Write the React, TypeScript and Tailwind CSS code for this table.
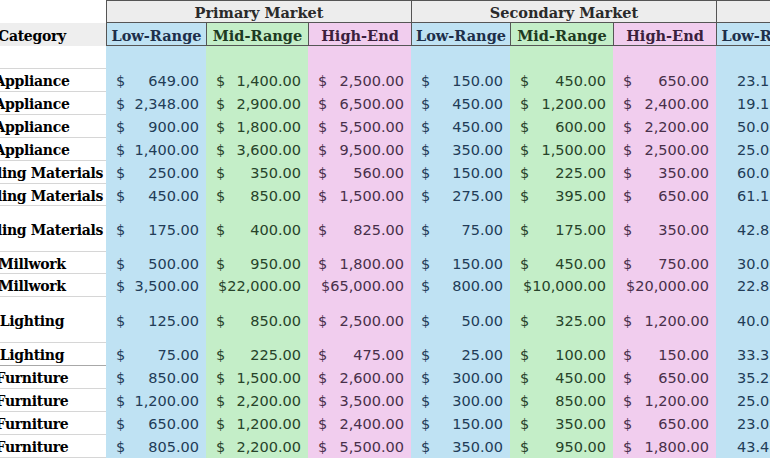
import React from "react";

type Row = { cat: string; h: string; v: number[]; pct: string };

const rows: Row[] = [
  { cat: "Appliance", h: "h-[23px]", v: [649, 1400, 2500, 150, 450, 650], pct: "23.11%" },
  { cat: "Appliance", h: "h-[23px]", v: [2348, 2900, 6500, 450, 1200, 2400], pct: "19.17%" },
  { cat: "Appliance", h: "h-[23px]", v: [900, 1800, 5500, 450, 600, 2200], pct: "50.00%" },
  { cat: "Appliance", h: "h-[23px]", v: [1400, 3600, 9500, 350, 1500, 2500], pct: "25.00%" },
  { cat: "Building Materials", h: "h-[23px]", v: [250, 350, 560, 150, 225, 350], pct: "60.00%" },
  { cat: "Building Materials", h: "h-[22px]", v: [450, 850, 1500, 275, 395, 650], pct: "61.11%" },
  { cat: "Building Materials", h: "h-[46px]", v: [175, 400, 825, 75, 175, 350], pct: "42.86%" },
  { cat: "Millwork", h: "h-[22px]", v: [500, 950, 1800, 150, 450, 750], pct: "30.00%" },
  { cat: "Millwork", h: "h-[23px]", v: [3500, 22000, 65000, 800, 10000, 20000], pct: "22.86%" },
  { cat: "Lighting", h: "h-[46px]", v: [125, 850, 2500, 50, 325, 1200], pct: "40.00%" },
  { cat: "Lighting", h: "h-[23px]", v: [75, 225, 475, 25, 100, 150], pct: "33.33%" },
  { cat: "Furniture", h: "h-[23px]", v: [850, 1500, 2600, 300, 450, 650], pct: "35.29%" },
  { cat: "Furniture", h: "h-[23px]", v: [1200, 2200, 3500, 300, 850, 1200], pct: "25.00%" },
  { cat: "Furniture", h: "h-[23px]", v: [650, 1200, 2400, 150, 350, 650], pct: "23.08%" },
  { cat: "Furniture", h: "h-[23px]", v: [805, 2200, 5500, 350, 950, 1800], pct: "43.48%" },
];

const cols = [
  { w: "w-[100px]", bg: "bg-[#bfe2f3]", fg: "text-[#223c57]", hfg: "text-[#1d2f4a]", label: "Low-Range" },
  { w: "w-[102px]", bg: "bg-[#c4eec8]", fg: "text-[#27432a]", hfg: "text-[#1d3a22]", label: "Mid-Range" },
  { w: "w-[103px]", bg: "bg-[#f1cdee]", fg: "text-[#48304a]", hfg: "text-[#3b1f3d]", label: "High-End" },
  { w: "w-[99px]", bg: "bg-[#bfe2f3]", fg: "text-[#223c57]", hfg: "text-[#1d2f4a]", label: "Low-Range" },
  { w: "w-[103px]", bg: "bg-[#c4eec8]", fg: "text-[#27432a]", hfg: "text-[#1d3a22]", label: "Mid-Range" },
  { w: "w-[103px]", bg: "bg-[#f1cdee]", fg: "text-[#48304a]", hfg: "text-[#3b1f3d]", label: "High-End" },
];

const fmt = (n: number) =>
  n.toLocaleString("en-US", { minimumFractionDigits: 2, maximumFractionDigits: 2 });

function Cat({ text }: { text: string }) {
  return (
    <div className="w-[106px] shrink-0 overflow-hidden h-full flex items-center pt-[3px]">
      <div className="w-[150px] ml-[-43px] shrink-0 text-center whitespace-nowrap font-bold text-[14px] text-black font-['DejaVu_Serif',serif] tracking-[-0.3px]">
        {text}
      </div>
    </div>
  );
}

export default function App() {
  return (
    <div className="w-[770px] h-[458px] overflow-hidden bg-white">
      <div className="w-max flex flex-col">
        {/* Group header */}
        <div className="flex h-[23px] font-['DejaVu_Serif',serif] font-bold text-[14.5px] text-[#2a2a2a]">
          <div className="w-[106px] shrink-0 bg-white" />
          <div className="w-[305px] shrink-0 bg-[#ededed] border-t border-l border-b border-[#555] flex items-center justify-center pt-[3px]">
            Primary Market
          </div>
          <div className="w-[305px] shrink-0 bg-[#ededed] border-t border-l border-b border-[#555] flex items-center justify-center pt-[3px]">
            Secondary Market
          </div>
          <div className="w-[100px] shrink-0 bg-[#ededed] border-t border-l border-b border-[#555]" />
        </div>
        {/* Sub header */}
        <div className="flex h-[23px] font-['DejaVu_Serif',serif] font-bold text-[14.5px]">
          <div className="w-[106px] shrink-0 bg-[#eeeeee] h-full">
            <Cat text="Category" />
          </div>
          {cols.map((c, i) => (
            <div
              key={i}
              className={`${c.w} ${c.bg} ${c.hfg} shrink-0 border-l border-b border-[#555] flex items-center justify-center whitespace-nowrap pt-[3px]`}
            >
              {c.label}
            </div>
          ))}
          <div className="w-[100px] shrink-0 bg-[#bfe2f3] text-[#1d2f4a] border-l border-b border-[#555] flex items-center justify-center whitespace-nowrap pt-[3px]">
            Low-Range
          </div>
        </div>
        {/* Blank row */}
        <div className="flex h-[23px]">
          <div className="w-[106px] shrink-0 border-b border-[#d6d6d6]" />
          {cols.map((c, i) => (
            <div key={i} className={`${c.w} ${c.bg} shrink-0`} />
          ))}
          <div className="w-[100px] shrink-0 bg-[#bfe2f3]" />
        </div>
        {/* Data rows */}
        {rows.map((r, ri) => (
          <div key={ri} className={`flex ${r.h} font-['DejaVu_Sans',sans-serif] text-[14.5px]`}>
            <div className={`w-[106px] shrink-0 border-b ${r.cat === "Lighting" && r.h === "h-[23px]" ? "border-[#a8a8a8]" : "border-[#d6d6d6]"}`}>
              <Cat text={r.cat} />
            </div>
            {cols.map((c, i) => (
              <div
                key={i}
                className={`${c.w} ${c.bg} ${c.fg} shrink-0 flex items-center ${r.v[i] >= 10000 ? "justify-end" : "justify-between"} pl-[10px] pr-[7px] pt-[3px] whitespace-nowrap`}
              >
                {r.v[i] >= 10000 ? (
                  <span>${fmt(r.v[i])}</span>
                ) : (
                  <>
                    <span>$</span>
                    <span>{fmt(r.v[i])}</span>
                  </>
                )}
              </div>
            ))}
            <div className="w-[100px] shrink-0 bg-[#bfe2f3] text-[#223c57] flex items-center pl-[21px] pt-[3px] whitespace-nowrap">
              {r.pct}
            </div>
          </div>
        ))}
      </div>
    </div>
  );
}
